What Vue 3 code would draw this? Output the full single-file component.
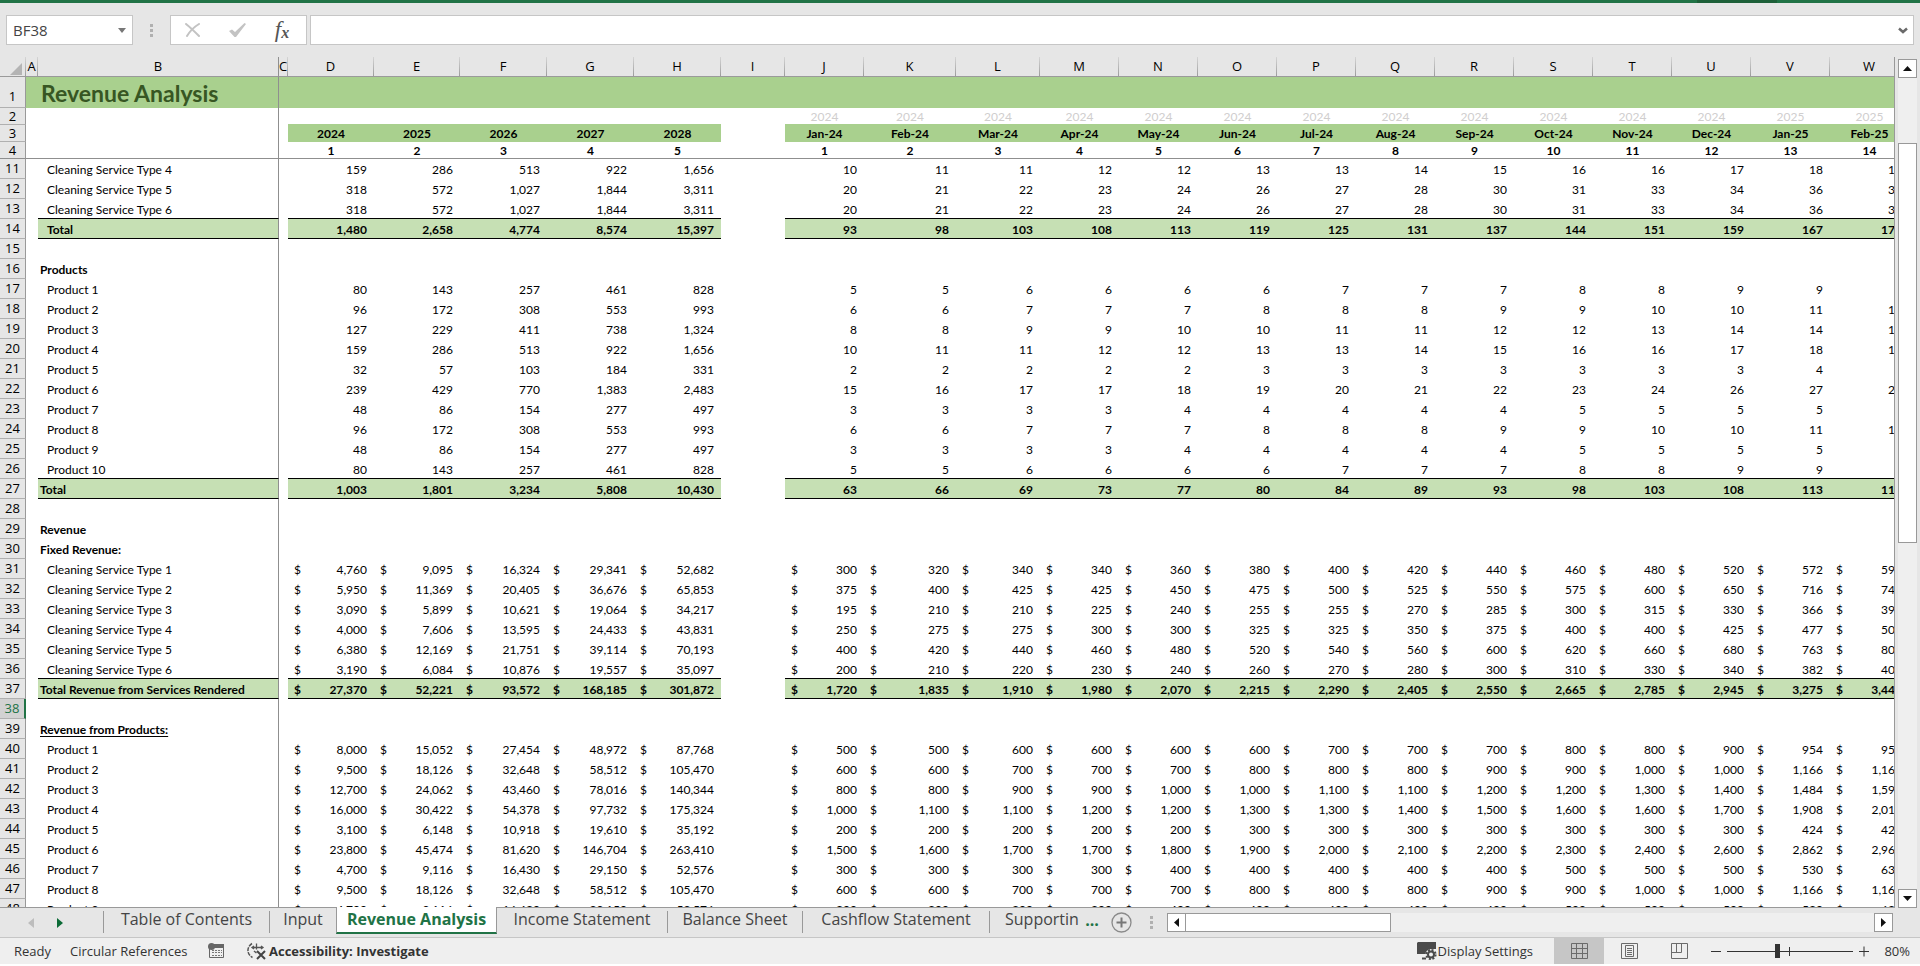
<script setup>
const columns = [
  { id: 'A', w: 12 }, { id: 'B', w: 241 }, { id: 'C', w: 9 },
  { id: 'D', w: 86 }, { id: 'E', w: 86 }, { id: 'F', w: 87 }, { id: 'G', w: 87 }, { id: 'H', w: 87 },
  { id: 'I', w: 64 }, { id: 'J', w: 79 }, { id: 'K', w: 92 }, { id: 'L', w: 84 },
  ...'MNOPQRSTUVW'.split('').map((id) => ({ id, w: 79 })),
]

const years = ['2024', '2025', '2026', '2027', '2028']
const months = 'Jan-24 Feb-24 Mar-24 Apr-24 May-24 Jun-24 Jul-24 Aug-24 Sep-24 Oct-24 Nov-24 Dec-24 Jan-25 Feb-25'.split(' ')

const item = (n, label, y, m, money = false) => ({ n, label, kind: 'item', money, y: y.split(' '), m: m.split(' ') })
const total = (n, label, y, m, money = false, inset = false) => ({ ...item(n, label, y, m, money), kind: 'total', inset })
const heading = (n, label, underline = false) => ({ n, label, kind: 'heading', underline })
const blank = (n, active = false) => ({ n, label: '', kind: 'blank', active })

const rows = [
  item(11, 'Cleaning Service Type 4', '159 286 513 922 1,656', '10 11 11 12 12 13 13 14 15 16 16 17 18 19'),
  item(12, 'Cleaning Service Type 5', '318 572 1,027 1,844 3,311', '20 21 22 23 24 26 27 28 30 31 33 34 36 38'),
  item(13, 'Cleaning Service Type 6', '318 572 1,027 1,844 3,311', '20 21 22 23 24 26 27 28 30 31 33 34 36 38'),
  total(14, 'Total', '1,480 2,658 4,774 8,574 15,397', '93 98 103 108 113 119 125 131 137 144 151 159 167 175', false, true),
  blank(15),
  heading(16, 'Products'),
  item(17, 'Product 1', '80 143 257 461 828', '5 5 6 6 6 6 7 7 7 8 8 9 9 9'),
  item(18, 'Product 2', '96 172 308 553 993', '6 6 7 7 7 8 8 8 9 9 10 10 11 11'),
  item(19, 'Product 3', '127 229 411 738 1,324', '8 8 9 9 10 10 11 11 12 12 13 14 14 15'),
  item(20, 'Product 4', '159 286 513 922 1,656', '10 11 11 12 12 13 13 14 15 16 16 17 18 19'),
  item(21, 'Product 5', '32 57 103 184 331', '2 2 2 2 2 3 3 3 3 3 3 3 4 4'),
  item(22, 'Product 6', '239 429 770 1,383 2,483', '15 16 17 17 18 19 20 21 22 23 24 26 27 28'),
  item(23, 'Product 7', '48 86 154 277 497', '3 3 3 3 4 4 4 4 4 5 5 5 5 6'),
  item(24, 'Product 8', '96 172 308 553 993', '6 6 7 7 7 8 8 8 9 9 10 10 11 11'),
  item(25, 'Product 9', '48 86 154 277 497', '3 3 3 3 4 4 4 4 4 5 5 5 5 6'),
  item(26, 'Product 10', '80 143 257 461 828', '5 5 6 6 6 6 7 7 7 8 8 9 9 9'),
  total(27, 'Total', '1,003 1,801 3,234 5,808 10,430', '63 66 69 73 77 80 84 89 93 98 103 108 113 119'),
  blank(28),
  heading(29, 'Revenue'),
  heading(30, 'Fixed Revenue:'),
  item(31, 'Cleaning Service Type 1', '4,760 9,095 16,324 29,341 52,682', '300 320 340 340 360 380 400 420 440 460 480 520 572 594', true),
  item(32, 'Cleaning Service Type 2', '5,950 11,369 20,405 36,676 65,853', '375 400 425 425 450 475 500 525 550 575 600 650 716 742', true),
  item(33, 'Cleaning Service Type 3', '3,090 5,899 10,621 19,064 34,217', '195 210 210 225 240 255 255 270 285 300 315 330 366 398', true),
  item(34, 'Cleaning Service Type 4', '4,000 7,606 13,595 24,433 43,831', '250 275 275 300 300 325 325 350 375 400 400 425 477 504', true),
  item(35, 'Cleaning Service Type 5', '6,380 12,169 21,751 39,114 70,193', '400 420 440 460 480 520 540 560 600 620 660 680 763 806', true),
  item(36, 'Cleaning Service Type 6', '3,190 6,084 10,876 19,557 35,097', '200 210 220 230 240 260 270 280 300 310 330 340 382 403', true),
  total(37, 'Total Revenue from Services Rendered', '27,370 52,221 93,572 168,185 301,872', '1,720 1,835 1,910 1,980 2,070 2,215 2,290 2,405 2,550 2,665 2,785 2,945 3,275 3,447', true),
  blank(38, true),
  heading(39, 'Revenue from Products:', true),
  item(40, 'Product 1', '8,000 15,052 27,454 48,972 87,768', '500 500 600 600 600 600 700 700 700 800 800 900 954 954', true),
  item(41, 'Product 2', '9,500 18,126 32,648 58,512 105,470', '600 600 700 700 700 800 800 800 900 900 1,000 1,000 1,166 1,166', true),
  item(42, 'Product 3', '12,700 24,062 43,460 78,016 140,344', '800 800 900 900 1,000 1,000 1,100 1,100 1,200 1,200 1,300 1,400 1,484 1,590', true),
  item(43, 'Product 4', '16,000 30,422 54,378 97,732 175,324', '1,000 1,100 1,100 1,200 1,200 1,300 1,300 1,400 1,500 1,600 1,600 1,700 1,908 2,014', true),
  item(44, 'Product 5', '3,100 6,148 10,918 19,610 35,192', '200 200 200 200 200 300 300 300 300 300 300 300 424 424', true),
  item(45, 'Product 6', '23,800 45,474 81,620 146,704 263,410', '1,500 1,600 1,700 1,700 1,800 1,900 2,000 2,100 2,200 2,300 2,400 2,600 2,862 2,968', true),
  item(46, 'Product 7', '4,700 9,116 16,430 29,150 52,576', '300 300 300 300 400 400 400 400 400 500 500 500 530 636', true),
  item(47, 'Product 8', '9,500 18,126 32,648 58,512 105,470', '600 600 700 700 700 800 800 800 900 900 1,000 1,000 1,166 1,166', true),
  item(48, 'Product 9', '4,700 9,116 16,430 29,150 52,576', '300 300 300 300 400 400 400 400 400 500 500 500 530 636', true),
]

const beforeTotal = (i) => rows[i + 1]?.kind === 'total'
const tabs = ['Table of Contents', 'Input', 'Revenue Analysis', 'Income Statement', 'Balance Sheet', 'Cashflow Statement', 'Supportin']
</script>

<template>
  <div class="app">
    <div class="titlebar"><span class="titlebar-tab"></span></div>

    <header class="formula-bar">
      <div class="name-box">
        <input aria-label="Name box" value="BF38" />
        <button aria-label="Open name list"><svg width="8" height="5" viewBox="0 0 8 5"><path d="M0 0h8L4 5z" fill="#777" /></svg></button>
      </div>
      <svg class="grip" width="3" height="13" viewBox="0 0 3 13"><path d="M0 0h3v3H0zM0 5h3v3H0zM0 10h3v3H0z" fill="#b0b0b0" /></svg>
      <div class="fx-buttons">
        <button aria-label="Cancel">
          <svg width="16" height="14" viewBox="0 0 16 14"><path d="M1 1c5 4 9 8 13 12M14 1C9 4 5 8 2 13" fill="none" stroke="#c3c3c3" stroke-width="2" stroke-linecap="round" /></svg>
        </button>
        <button aria-label="Enter">
          <svg width="18" height="14" viewBox="0 0 18 14"><path d="M0 8l3-1.500 3 2.500L15.500 0 17 1 7 14H5.500z" fill="#c3c3c3" /></svg>
        </button>
        <button aria-label="Insert function" class="fx"><i>f</i><i class="sub">x</i></button>
      </div>
      <div class="formula">
        <input aria-label="Formula" value="" />
        <button aria-label="Expand formula bar"><svg width="10" height="7" viewBox="0 0 10 7"><path d="M1 1.500l4 3.500 4-3.500" fill="none" stroke="#6a6a6a" stroke-width="2.500" /></svg></button>
      </div>
    </header>

    <main class="workspace">
      <div class="sheet">
        <table>
          <colgroup>
            <col class="row-head-col" />
            <col v-for="c in columns" :key="c.id" :style="{ width: c.w + 'px' }" />
          </colgroup>
          <thead>
            <tr class="letters">
              <th class="corner"><svg width="12" height="12" viewBox="0 0 12 12"><path d="M12 0v12H0z" fill="#b4b4b4" /></svg></th>
              <th v-for="c in columns" :key="c.id" scope="col" :class="{ frozen: c.id === 'B' }"><span>{{ c.id }}</span></th>
            </tr>
          </thead>
          <tbody>
            <tr class="title-row">
              <th scope="row">1</th>
              <td></td>
              <td class="frozen title">Revenue Analysis</td>
              <td colspan="21"></td>
            </tr>
            <tr class="top-row year-row">
              <th scope="row">2</th>
              <td></td><td class="frozen"></td><td></td>
              <td colspan="5"></td><td></td>
              <td v-for="(m, i) in months" :key="m">{{ i < 12 ? '2024' : '2025' }}</td>
            </tr>
            <tr class="top-row period-row">
              <th scope="row">3</th>
              <td></td><td class="frozen"></td><td></td>
              <td v-for="y in years" :key="y" class="band">{{ y }}</td>
              <td></td>
              <td v-for="m in months" :key="m" class="band">{{ m }}</td>
            </tr>
            <tr class="top-row index-row">
              <th scope="row">4</th>
              <td></td><td class="frozen"></td><td></td>
              <td v-for="(y, i) in years" :key="y">{{ i + 1 }}</td>
              <td></td>
              <td v-for="(m, i) in months" :key="m">{{ i + 1 }}</td>
            </tr>
            <tr
              v-for="(r, i) in rows"
              :key="r.n"
              :class="['body-row', r.kind, { 'before-total': beforeTotal(i), active: r.active, money: r.money }]"
            >
              <th scope="row">{{ r.n }}</th>
              <td></td>
              <td class="frozen label edge" :class="{ inset: r.inset, underline: r.underline }">{{ r.label }}</td>
              <td></td>
              <template v-if="r.y">
                <td v-for="(v, k) in r.y" :key="'y' + k" class="num edge"><div><span v-if="r.money">$</span><b>{{ v }}</b></div></td>
                <td></td>
                <td v-for="(v, k) in r.m" :key="'m' + k" class="num edge"><div><span v-if="r.money">$</span><b>{{ v }}</b></div></td>
              </template>
              <td v-else colspan="20"></td>
            </tr>
          </tbody>
        </table>
      </div>
      <div class="vscroll">
        <button aria-label="Scroll up"><svg width="9" height="5" viewBox="0 0 9 5"><path d="M0 5h9L4.500 0z" fill="#111" /></svg></button>
        <div class="vtrack"><div class="vthumb"></div></div>
        <button aria-label="Scroll down"><svg width="9" height="5" viewBox="0 0 9 5"><path d="M0 0h9L4.500 5z" fill="#111" /></svg></button>
      </div>
    </main>

    <nav class="tabbar" aria-label="Sheets">
      <div class="tab-nav">
        <button aria-label="Previous sheets"><svg width="6" height="10" viewBox="0 0 6 10"><path d="M6 0v10L0 5z" fill="#bdbdbd" /></svg></button>
        <button aria-label="Next sheets"><svg width="6" height="10" viewBox="0 0 6 10"><path d="M0 0v10l6-5z" fill="#0c6b37" /></svg></button>
      </div>
      <div class="tabs">
        <button v-for="t in tabs" :key="t" :class="{ current: t === 'Revenue Analysis' }">{{ t }}</button>
      </div>
      <button class="more" aria-label="More sheets">...</button>
      <button class="add" aria-label="New sheet">
        <svg width="21" height="21" viewBox="0 0 21 21"><circle cx="10.500" cy="10.500" r="9.500" fill="none" stroke="#8a8a8a" stroke-width="1.300" /><path d="M10.500 5.500v10M5.500 10.500h10" stroke="#777" stroke-width="2" /></svg>
      </button>
      <svg class="tab-grip" width="3" height="13" viewBox="0 0 3 13"><path d="M0 0h3v3H0zM0 5h3v3H0zM0 10h3v3H0z" fill="#b0b0b0" /></svg>
      <div class="hscroll">
        <button aria-label="Scroll left"><svg width="5" height="9" viewBox="0 0 5 9"><path d="M5 0v9L0 4.500z" fill="#111" /></svg></button>
        <div class="htrack"><div class="hthumb"></div></div>
        <button aria-label="Scroll right"><svg width="5" height="9" viewBox="0 0 5 9"><path d="M0 0v9l5-4.500z" fill="#111" /></svg></button>
      </div>
    </nav>

    <footer class="status">
      <span class="ready">Ready</span>
      <span class="circular">Circular References</span>
      <button class="macro" aria-label="Record macro">
        <svg width="16" height="16" viewBox="0 0 16 16">
          <path d="M3.500 1.500h12v13h-14V5" fill="none" stroke="#666" />
          <path d="M6 1h10v4H6z" fill="#666" />
          <circle cx="3.500" cy="3.500" r="3.500" fill="#666" />
          <path d="M4 7.500h10M4 9.500h10M4 12.500h10" stroke="#777" stroke-dasharray="2 1" />
        </svg>
      </button>
      <button class="access">
        <svg width="20" height="18" viewBox="0 0 20 18">
          <path d="M5 1.500C-.5 5-.5 12 5.500 15.500" fill="none" stroke="#555" stroke-width="1.500" stroke-dasharray="4 1" />
          <path d="M5 5.500h11M9.500 1.500v6M7 4l-2 1.500L7 7M14 4l2 1.500L14 7" fill="none" stroke="#555" stroke-width="1.300" />
          <path d="M7 9l2.500 2" stroke="#555" stroke-width="1.500" />
          <path d="M10 9l8 8M18 9l-8 8" stroke="#444" stroke-width="2" />
        </svg>
        Accessibility: Investigate
      </button>
      <div class="status-right">
        <button class="display">
          <svg width="20" height="18" viewBox="0 0 20 18">
            <path d="M1 0h18v7h-5l-5 4v1H0V1z" fill="#4a4a4a" />
            <path d="M5 16.500h4" stroke="#4a4a4a" stroke-width="2" />
            <circle cx="14" cy="12.500" r="5.500" fill="#efefef" />
            <circle cx="14" cy="12.500" r="3" fill="none" stroke="#4a4a4a" stroke-width="2" />
            <circle cx="14" cy="12.500" r="4.600" fill="none" stroke="#4a4a4a" stroke-width="2" stroke-dasharray="2 1.610" />
          </svg>
          Display Settings
        </button>
        <button class="view selected" aria-label="Normal view">
          <svg width="17" height="16" viewBox="0 0 17 16"><path d="M.5.500h16v15H.5zM.5 5.500h16M.5 10.500h16M5.500.500v15M11.500.500v15" fill="none" stroke="#6b6b6b" /></svg>
        </button>
        <button class="view" aria-label="Page layout view">
          <svg width="17" height="16" viewBox="0 0 17 16"><path d="M.5.500h16v15H.5zM4.500 2.500h8v11h-8zM6 5.500h5M6 7.500h5M6 9.500h5M6 11.500h5" fill="none" stroke="#6b6b6b" /></svg>
        </button>
        <button class="view" aria-label="Page break preview">
          <svg width="17" height="16" viewBox="0 0 17 16"><path d="M.5.500h16v15H.5zM.5 9.500h10v-9M5.500.500v9" fill="none" stroke="#6b6b6b" /></svg>
        </button>
        <button class="zoom-btn" aria-label="Zoom out"><svg width="10" height="11" viewBox="0 0 10 11"><path d="M0 5.500h10" stroke="#333" /></svg></button>
        <input class="zoom" type="range" min="0" max="100" value="40" aria-label="Zoom" />
        <button class="zoom-btn" aria-label="Zoom in"><svg width="10" height="11" viewBox="0 0 10 11"><path d="M0 5.500h10M5 .500v10" stroke="#333" /></svg></button>
        <span class="percent">80%</span>
      </div>
    </footer>
  </div>
</template>

<style>
body { margin: 0; }
</style>

<style scoped>
* { box-sizing: border-box; }
.app {
  display: flex;
  flex-direction: column;
  height: 100vh;
  overflow: hidden;
  background: #e6e6e6;
  border-bottom: 2px solid #fff;
  color: #000;
  font-family: "Open Sans", sans-serif;
  font-size: 12px;
}
button {
  display: flex;
  align-items: center;
  justify-content: center;
  flex: none;
  margin: 0;
  padding: 0;
  border: 0;
  background: none;
  color: inherit;
  font: inherit;
}
svg { display: block; flex: none; }
input { margin: 0; padding: 0; border: 0; outline: 0; background: none; font: inherit; color: inherit; min-width: 0; }

.titlebar { flex: none; height: 3px; background: #217346; display: flex; justify-content: flex-end; padding-right: 143px; }
.titlebar-tab { width: 80px; background: #1e6039; }

.formula-bar { flex: none; display: flex; align-items: center; padding: 12px 6px; }
.name-box, .fx-buttons, .formula { display: flex; align-items: center; height: 30px; background: #fff; border: 1px solid #c6c6c6; }
.name-box { width: 127px; padding: 0 6px; }
.name-box input { flex: 1; font-size: 15px; color: #444; }
.grip { margin: 0 17px; }
.fx-buttons { width: 137px; padding: 0 11px 0 9px; justify-content: space-between; }
.fx-buttons button { width: 26px; }
.fx { font-family: "Liberation Serif", serif; font-size: 23px; line-height: 26px; color: #555; }
.fx .sub { font-size: 16px; line-height: 16px; padding-top: 6px; font-weight: 700; }
.formula { flex: 1; margin-left: 3px; padding-right: 5px; }
.formula input { flex: 1; }

.workspace { flex: 1; min-height: 0; display: flex; gap: 3px; padding-right: 3px; }
.sheet { flex: 1; min-width: 0; overflow: hidden; border-right: 1px solid #999; border-bottom: 1px solid #999; }
table { table-layout: fixed; width: 0; border-collapse: separate; border-spacing: 0; background: #fff; font-family: Lato, sans-serif; }
.row-head-col { width: 26px; }
td, th { padding: 0; white-space: nowrap; font-size: 12px; }
th { background: #e6e6e6; font-family: "Open Sans", sans-serif; font-weight: 400; }
.frozen { border-right: 1px solid #8f8f8f; }

.letters th { height: 20px; line-height: 19px; font-size: 13px; border-bottom: 1px solid #999; border-right: 1px solid; border-image: linear-gradient(#d8d8d8, #999) 1; }
.letters th span { display: flex; justify-content: center; }
.letters .frozen { border-image: none; border-color: #8f8f8f; border-bottom-color: #999; }
.corner svg { margin: 4px 0 0 10px; }

tbody th { border-right: 1px solid #999; border-bottom: 1px solid #b0b0b0; text-align: center; font-size: 13px; }
.title-row > * { height: 31px; line-height: 30px; }
.title-row th { vertical-align: bottom; line-height: 22px; }
.title-row td { background: #a9d08e; }
.title-row .title { padding-left: 3px; color: #375623; font-size: 23px; font-weight: 700; }
.top-row > * { height: 17px; line-height: 16px; text-align: center; font-weight: 700; }
.top-row th { font-weight: 400; }
.year-row td { color: #d0cece; font-weight: 400; }
.band { background: #a9d08e; box-shadow: 0 -1px #a9d08e; }
.index-row td, .index-row th { border-bottom: 1px solid #8f8f8f; }
.index-row > * { line-height: 15px; }
.index-row td { padding-top: 1px; }

.body-row > * { height: 20px; line-height: 17px; }
.body-row td { padding: 2px 0 1px; }
.body-row .label { padding-left: 9px; }
.heading .label, .body-row.total .label { padding-left: 2px; font-weight: 700; }
.body-row.heading .label { padding-left: 2px; }
.body-row.total .label.inset { padding-left: 9px; }
.underline { text-decoration: underline; text-underline-offset: 2px; }
.num div { display: flex; justify-content: flex-end; padding: 0 7px 0 6px; }
.num span { flex: 1; }
.num b { font-weight: inherit; }
.body-row.total .edge, .body-row.before-total .edge { padding-bottom: 0; border-bottom: 1px solid #000; }
.total .edge { background: #c6e0b4; font-weight: 700; }
.active th { background: #d2d2d2; color: #217346; border-right: 2px solid #217346; }

.vscroll { flex: none; width: 19px; display: flex; flex-direction: column; padding-top: 2px; }
.vscroll button, .hscroll button { width: 19px; height: 19px; background: #fff; border: 1px solid #999; }
.vtrack { flex: 1; background: #efefef; padding-top: 65px; }
.vthumb { height: 400px; background: #fff; border: 1px solid #999; }

.tabbar { flex: none; display: flex; align-items: center; height: 29px; padding-right: 27px; }
.tab-nav { width: 103px; display: flex; gap: 23px; padding-left: 28px; }
.tabs { align-self: stretch; display: grid; grid-template-columns: 166px 67px 161px 170px 135px 187px 90px; margin-top: -1px; }
.tabs button { align-self: start; height: 22px; margin-top: 4px; padding-bottom: 6px; border-left: 1px solid #999; color: #444; font-size: 16px; line-height: 16px; white-space: nowrap; }
.tabs .current { height: 27px; margin-top: 0; padding-bottom: 1px; background: #fff; color: #217346; font-weight: 700; border-right: 1px solid #999; border-bottom: 2px solid #217346; }
.tabs .current + button { border-left: 0; }
.tabs button:last-child { justify-content: flex-start; padding-left: 15px; }
.more { width: 26px; color: #217346; font-size: 16px; font-weight: 700; line-height: 16px; padding-bottom: 6px; }
.add { margin-left: 6px; }
.tab-grip { margin: 0 14px 0 18px; }
.hscroll { flex: 1; display: flex; }
.htrack { flex: 1; background: #efefef; }
.hthumb { width: 205px; height: 19px; background: #fff; border: 1px solid #999; border-left: 0; }

.status { flex: none; display: flex; align-items: center; height: 27px; padding-left: 14px; background: #efefef; border-top: 1px solid #c6c6c6; color: #333; font-size: 13px; white-space: nowrap; }
.ready { width: 56px; }
.circular { width: 138px; }
.macro { margin-right: 23px; }
.access { font-weight: 700; gap: 2px; }
.status-right { margin-left: auto; align-self: stretch; display: flex; align-items: center; padding-right: 10px; }
.display { gap: 1px; margin-right: 21px; }
.view { width: 50px; align-self: stretch; }
.view.selected { background: #c6c6c6; }
.zoom-btn { width: 14px; }
.view + .zoom-btn { margin-left: 5px; }
.zoom { appearance: none; width: 126px; height: 15px; margin: 0 4px; background: linear-gradient(#333, #333) 62px 50% / 1px 9px no-repeat, linear-gradient(#333, #333) 0 50% / 100% 1px no-repeat; }
.zoom::-webkit-slider-thumb { appearance: none; width: 5px; height: 14px; background: #333; border: 0; border-radius: 0; }
.percent { width: 39px; text-align: right; }
</style>
